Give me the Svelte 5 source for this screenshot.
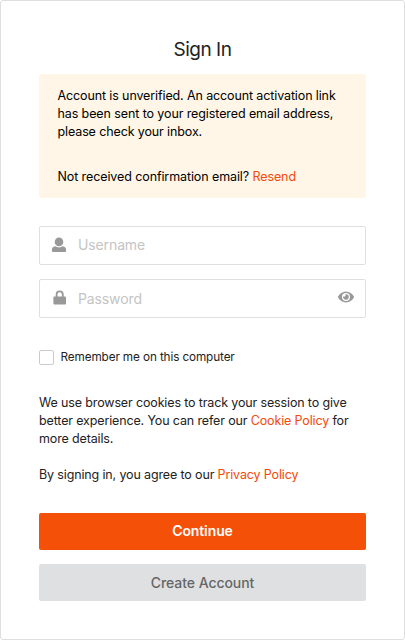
<script>
  let username = $state('');
  let password = $state('');
  let remember = $state(false);
  let visible = $state(false);
</script>

<main class="card">
  <h1>Sign In</h1>

  <section class="notice">
    <p>
      <span class="line">Account is unverified. An account activation link</span>
      <span class="line n2">has been sent to your registered email address,</span>
      <span class="line">please check your inbox.</span>
    </p>
    <p><span class="line n4">Not received confirmation email? <a href="#resend">Resend</a></span></p>
  </section>

  <form onsubmit={(e) => e.preventDefault()}>
    <label class="field name">
      <svg width="16" height="16" viewBox="0 0 16 16" aria-hidden="true">
        <circle cx="8" cy="4.900" r="4.300" />
        <path d="M4.200 9.300C2 9.700.9 11 .9 12.900v.9c0 .8.5 1.300 1.300 1.300h11.600c.8 0 1.300-.5 1.300-1.300v-.9c0-1.900-1.100-3.200-3.300-3.600C10.700 10 9.400 10.400 8 10.400S5.300 10 4.200 9.300z" />
      </svg>
      <input type="text" placeholder="Username" bind:value={username} />
    </label>

    <label class="field">
      <svg class="lock" width="16" height="16" viewBox="0 0 16 16" aria-hidden="true">
        <path fill-rule="evenodd" d="M4.700 6.400V4.500a4 4 0 0 1 8 0v1.900h.9c.9 0 1.400.5 1.400 1.400v5.400c0 .9-.5 1.400-1.400 1.400H3.800c-.9 0-1.400-.5-1.400-1.400V7.800C2.400 6.900 2.900 6.400 3.800 6.400zM6.500 6.400h4.400V4.500a2.200 2.200 0 0 0-4.400 0z" />
      </svg>
      <input type={visible ? 'text' : 'password'} placeholder="Password" bind:value={password} />
      <button class="eye" type="button" aria-label="Show password" onclick={() => (visible = !visible)}>
        <svg width="16" height="12" viewBox="0 0 16 12" aria-hidden="true">
          <path fill-rule="evenodd" d="M8 .6C4.500.6 1.600 2.800.1 5.600a.9.900 0 0 0 0 .8C1.600 9.200 4.500 11.400 8 11.400s6.400-2.200 7.900-5a.9.900 0 0 0 0-.8C14.400 2.800 11.500.6 8 .6zM8 2a4 4 0 1 1 0 8 4 4 0 0 1 0-8z" />
          <path d="M8 3.200a2.800 2.800 0 1 1-2.700 2.100 1.400 1.400 0 0 0 2-1.900c.2-.1.500-.2.700-.2z" />
        </svg>
      </button>
    </label>

    <label class="remember">
      <input type="checkbox" bind:checked={remember} />
      <span>Remember me on this computer</span>
    </label>

    <div class="terms">
      <span class="line">We use browser cookies to track your session to give</span>
      <span class="line">better experience. You can refer our <a href="#cookies">Cookie Policy</a> for</span>
      <span class="line">more details.</span>
    </div>
    <div class="terms agree">
      <span class="line">By signing in, you agree to our <a href="#privacy">Privacy Policy</a></span>
    </div>

    <button class="btn primary" type="submit">Continue</button>
    <button class="btn secondary" type="button">Create Account</button>
  </form>
</main>

<style>
  :global(body) {
    margin: 0;
    background: #fff;
  }
  .card,
  .card * {
    box-sizing: border-box;
  }
  .card {
    width: 405px;
    height: 640px;
    padding: 36px 38px 0;
    border: 1px solid #dfdfdf;
    border-radius: 3px;
    background: #fff;
    color: #222;
    font-family: Inter, 'Liberation Sans', sans-serif;
    font-size: 12.5px;
    line-height: 18px;
    overflow: hidden;
  }
  h1 {
    margin: 0 0 12px;
    padding-top: 1px;
    font-size: 19px;
    line-height: 24px;
    font-weight: 400;
    text-align: center;
    letter-spacing: -0.5px;
  }
  a {
    color: #f44a0a;
    text-decoration: none;
  }
  .line {
    display: block;
    width: max-content;
    white-space: nowrap;
    letter-spacing: -0.12px;
  }
  .n2,
  .n4 {
    letter-spacing: -0.1px;
  }
  .terms .line {
    letter-spacing: -0.14px;
  }
  .notice {
    height: 124px;
    padding: 13px 18.5px 0;
    border-radius: 2px;
    background: #fff6e7;
    color: #000;
  }
  .notice p {
    margin: 0 0 27px;
  }
  form {
    padding-top: 28px;
  }
  .field {
    display: flex;
    align-items: center;
    height: 39px;
    margin-bottom: 14px;
    padding: 0 11px;
    border: 1px solid #dedfe0;
    border-radius: 2px;
  }
  .field svg {
    flex: none;
    fill: #999;
  }
  .field input {
    flex: 1;
    min-width: 0;
    height: 100%;
    margin-left: 11px;
    padding: 0;
    border: 0;
    outline: 0;
    background: none;
    font: 400 14px/18px Inter, sans-serif;
    letter-spacing: -0.12px;
    color: #222;
  }
  .name input {
    padding-bottom: 2px;
  }
  .name svg {
    margin-bottom: 2px;
  }
  .field .lock {
    margin-bottom: 1px;
  }
  .field input::placeholder {
    color: #c4c4c4;
    opacity: 1;
  }
  .eye {
    display: flex;
    padding: 0;
    margin-bottom: 3px;
    border: 0;
    background: none;
  }
  .remember {
    display: flex;
    align-items: center;
    height: 16px;
    margin-top: 31px;
    font-size: 11.75px;
    letter-spacing: -0.12px;
  }
  .remember input {
    appearance: none;
    width: 15px;
    height: 15px;
    margin: 0 6.500px 0 0;
    border: 1px solid #ccc;
    border-radius: 2px;
  }
  .terms {
    margin-top: 29px;
  }
  .agree {
    margin-top: 18px;
    margin-bottom: 29px;
  }
  .btn {
    display: block;
    width: 100%;
    height: 37px;
    margin-bottom: 14px;
    padding: 0 0 1px;
    border: 0;
    border-radius: 2px;
    font: 600 14px/18px Inter, sans-serif;
    letter-spacing: -0.1px;
  }
  .primary {
    background: #f45007;
    color: #fff;
  }
  .secondary {
    padding: 1px 0 0;
    background: #dfe0e2;
    color: #666;
    font-weight: 500;
    letter-spacing: -0.05px;
  }
</style>
